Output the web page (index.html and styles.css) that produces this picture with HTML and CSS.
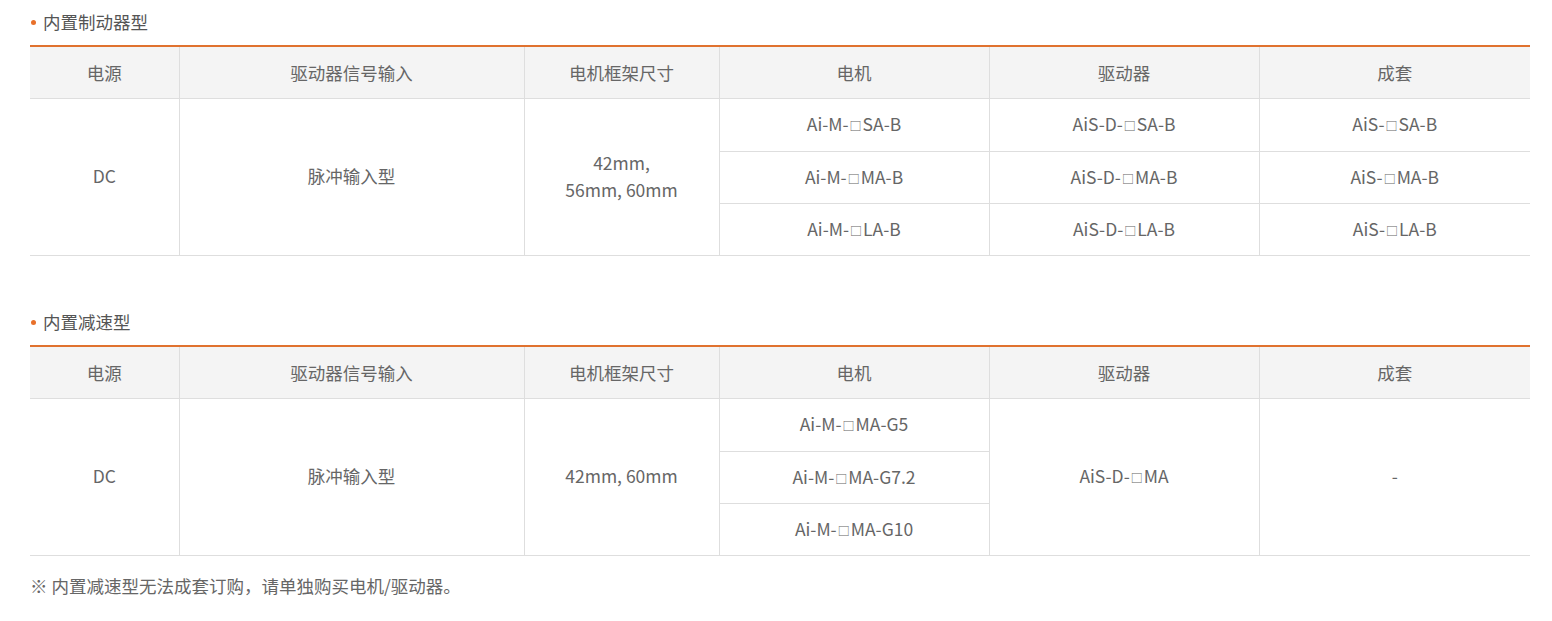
FILE: index.html
```html
<!DOCTYPE html>
<html lang="zh">
<head>
<meta charset="utf-8">
<title>产品型号</title>
<link rel="stylesheet" href="styles.css">
</head>
<body>
<div class="page">
  <section class="block">
    <h3 class="title"><span class="dot"></span>内置制动器型</h3>
    <table class="spec">
      <colgroup>
        <col class="c1"><col class="c2"><col class="c3"><col class="c4"><col class="c5"><col class="c6">
      </colgroup>
      <thead>
        <tr><th>电源</th><th>驱动器信号输入</th><th>电机框架尺寸</th><th>电机</th><th>驱动器</th><th>成套</th></tr>
      </thead>
      <tbody>
        <tr class="r1">
          <td rowspan="3" class="first">DC</td>
          <td rowspan="3">脉冲输入型</td>
          <td rowspan="3">42mm,<br>56mm, 60mm</td>
          <td>Ai-M-<span class="sq">□</span>SA-B</td><td>AiS-D-<span class="sq">□</span>SA-B</td><td>AiS-<span class="sq">□</span>SA-B</td>
        </tr>
        <tr><td>Ai-M-<span class="sq">□</span>MA-B</td><td>AiS-D-<span class="sq">□</span>MA-B</td><td>AiS-<span class="sq">□</span>MA-B</td></tr>
        <tr><td>Ai-M-<span class="sq">□</span>LA-B</td><td>AiS-D-<span class="sq">□</span>LA-B</td><td>AiS-<span class="sq">□</span>LA-B</td></tr>
      </tbody>
    </table>
  </section>
  <section class="block second">
    <h3 class="title"><span class="dot"></span>内置减速型</h3>
    <table class="spec">
      <colgroup>
        <col class="c1"><col class="c2"><col class="c3"><col class="c4"><col class="c5"><col class="c6">
      </colgroup>
      <thead>
        <tr><th>电源</th><th>驱动器信号输入</th><th>电机框架尺寸</th><th>电机</th><th>驱动器</th><th>成套</th></tr>
      </thead>
      <tbody>
        <tr class="r1">
          <td rowspan="3" class="first">DC</td>
          <td rowspan="3">脉冲输入型</td>
          <td rowspan="3">42mm, 60mm</td>
          <td>Ai-M-<span class="sq">□</span>MA-G5</td>
          <td rowspan="3">AiS-D-<span class="sq">□</span>MA</td>
          <td rowspan="3">-</td>
        </tr>
        <tr><td>Ai-M-<span class="sq">□</span>MA-G7.2</td></tr>
        <tr><td>Ai-M-<span class="sq">□</span>MA-G10</td></tr>
      </tbody>
    </table>
    <p class="note">※ 内置减速型无法成套订购，请单独购买电机/驱动器。</p>
  </section>
</div>
</body>
</html>
```
FILE: styles.css
```css
html, body {
  margin: 0;
  padding: 0;
  background: #fff;
}
body {
  font-family: "Noto Sans CJK SC", "Noto Sans", sans-serif;
  font-size: 17.5px;
  color: #666;
}
.page {
  padding: 10px 22px 0 30px;
}
.block.second {
  margin-top: 54px;
}
.title {
  margin: 0 0 11px 0;
  font-size: 17.5px;
  font-weight: normal;
  line-height: 24px;
  height: 24px;
  color: #555;
  display: flex;
  align-items: center;
}
.dot {
  width: 5px;
  height: 5px;
  border-radius: 50%;
  background: #e8702a;
  margin: 0 7px 0 1px;
}
.spec {
  width: 1500px;
  border-collapse: collapse;
  table-layout: fixed;
  border-top: 2px solid #e0722f;
}
.c1 { width: 149px; }
.c2 { width: 345px; }
.c3 { width: 195px; }
.c4 { width: 270px; }
.c5 { width: 270px; }
.c6 { width: 271px; }
.spec th,
.spec td {
  height: 51px;
  padding: 0 10px;
  text-align: center;
  vertical-align: middle;
  font-weight: normal;
  line-height: 27px;
  border-bottom: 1px solid #dedede;
  border-left: 1px solid #dedede;
  color: #666;
}
.spec td {
  height: 48px;
  padding-bottom: 3px;
}
.spec tr.r1 td {
  height: 49px;
}
.spec th:first-child,
.spec td.first {
  border-left: none;
}
.spec th {
  background: #f4f4f4;
}
.sq {
  font-size: 12px;
  line-height: 0;
  margin: 0 1px;
}
.note {
  margin: 18px 0 0 0;
  line-height: 24px;
  color: #666;
}
```
